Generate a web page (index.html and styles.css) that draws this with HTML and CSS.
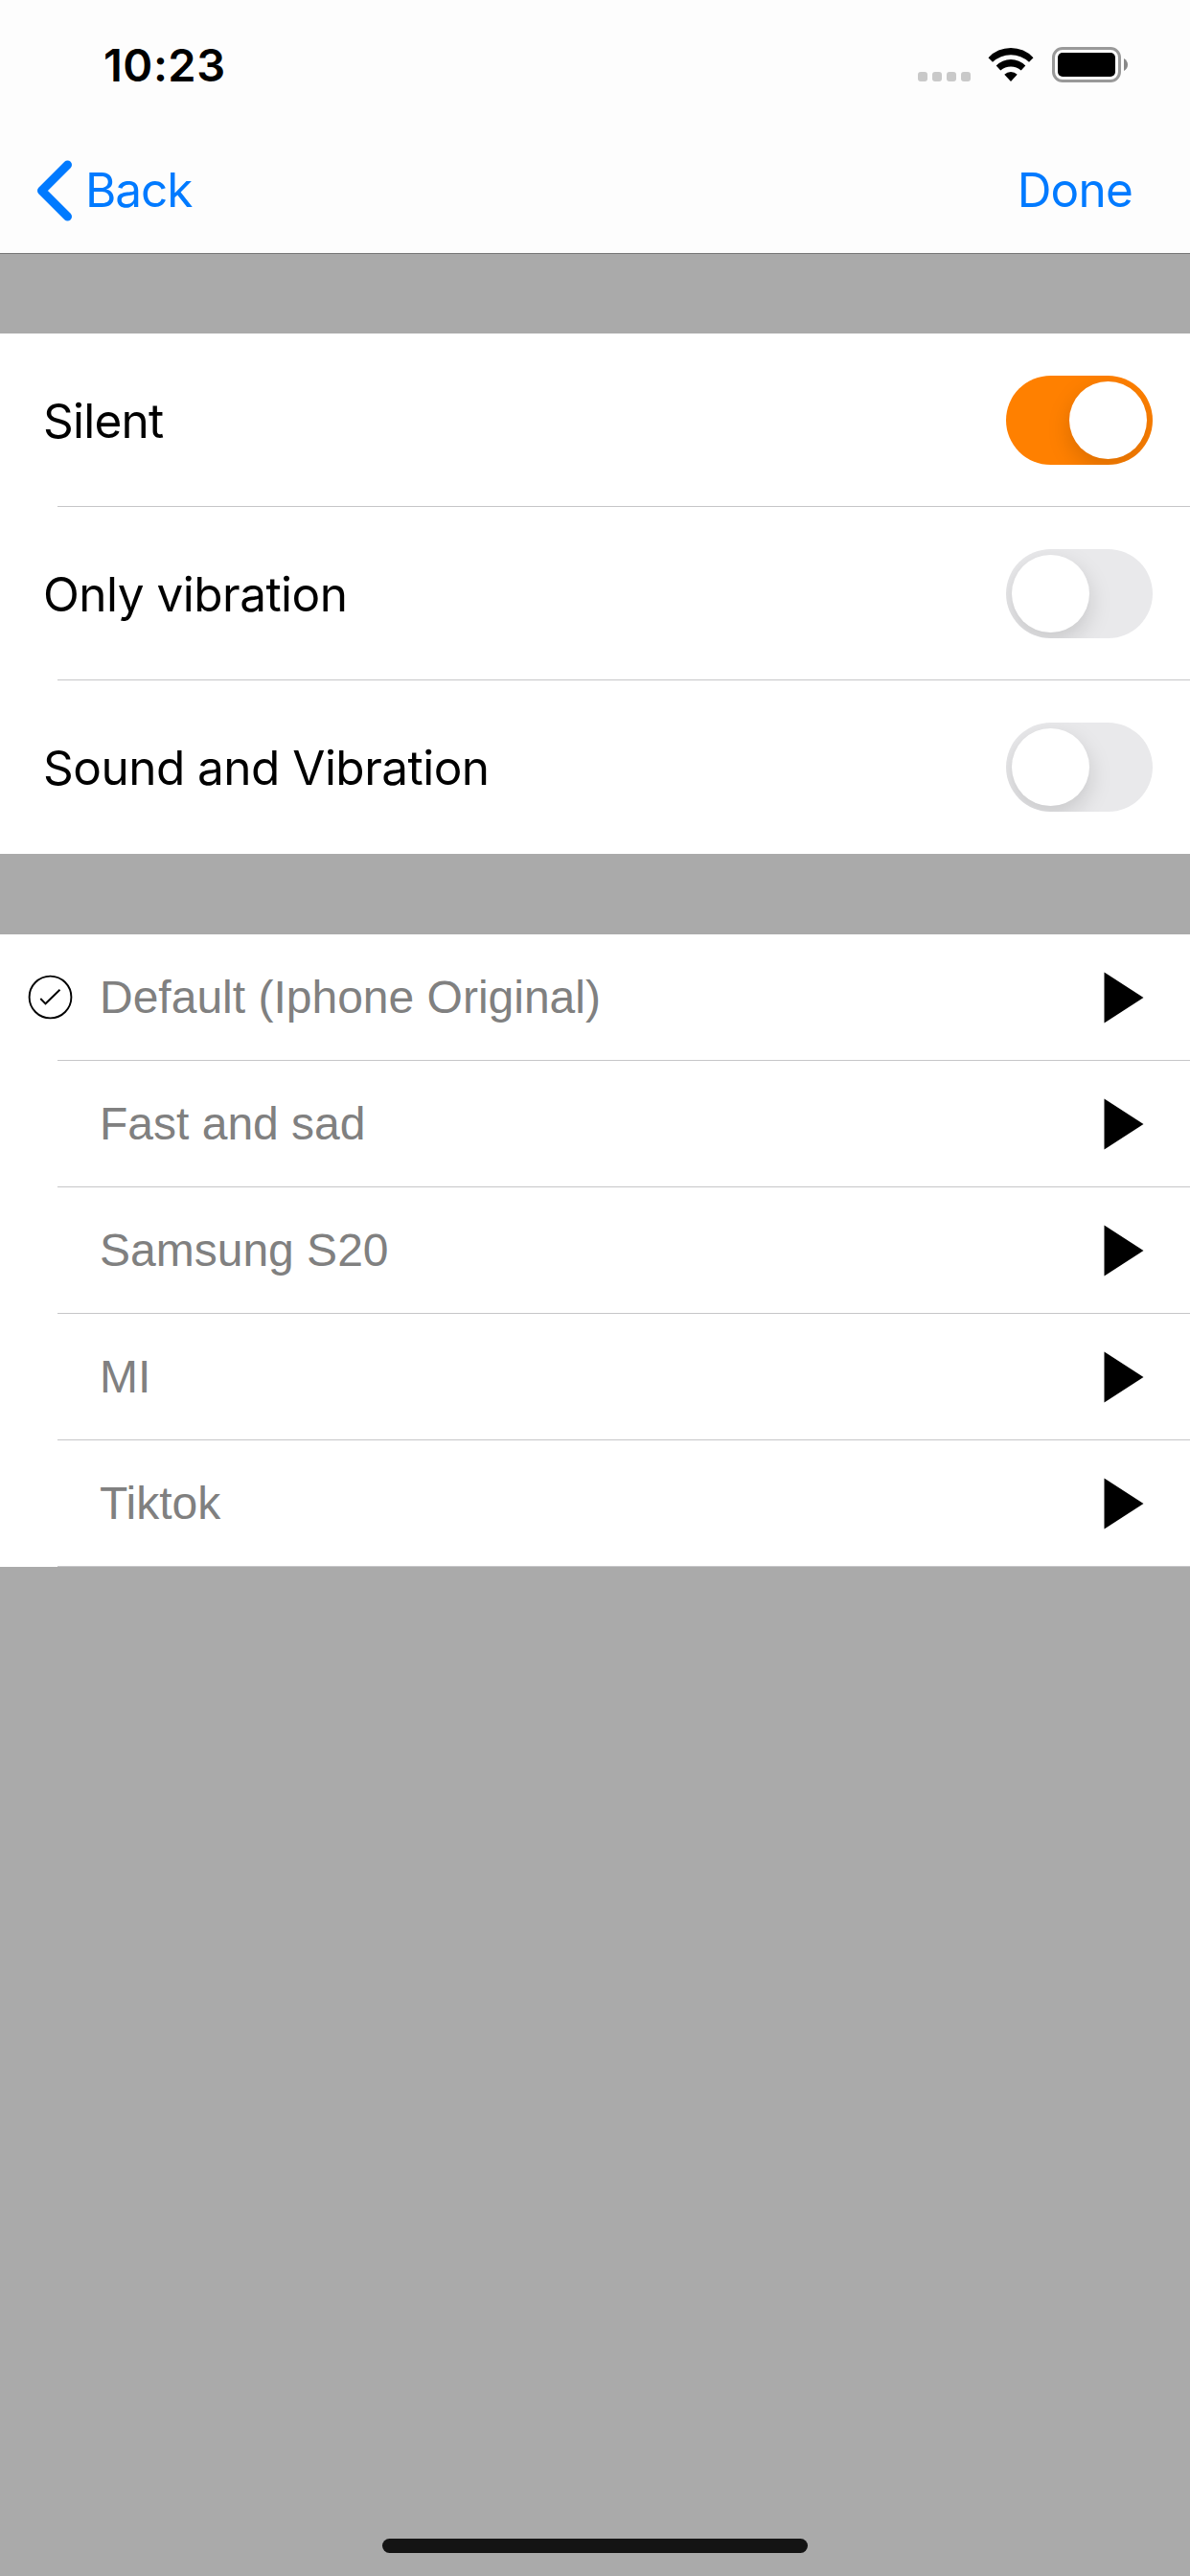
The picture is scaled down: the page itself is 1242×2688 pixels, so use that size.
FILE: index.html
```html
<!DOCTYPE html>
<html lang="en">
<head>
<meta charset="utf-8">
<title>Notification sound</title>
<link rel="stylesheet" href="styles.css">
</head>
<body>
<div class="screen">
  <header class="header">
    <div class="status">
      <span class="time">10:23</span>
      <div class="indicators">
        <div class="signal"><i></i><i></i><i></i><i></i></div>
        <svg class="wifi" width="48" height="37" viewBox="0 0 48 37">
          <path d="M.5 11.2A32 32 0 0 1 47.5 11.2L43 15.7A27.8 27.8 0 0 0 5 15.7Z"/>
          <path d="M8.7 19.6A21.3 21.3 0 0 1 39.3 19.6L34.7 24.6A16 16 0 0 0 13.3 24.6Z"/>
          <path d="M17.3 28.7A9.5 9.5 0 0 1 30.7 28.7L24 36Z"/>
        </svg>
        <svg class="battery" width="80" height="37" viewBox="0 0 80 37">
          <rect x="1.5" y="1.5" width="69" height="34" rx="9.5" fill="none" stroke="#999" stroke-width="3"/>
          <rect x="6" y="6" width="60" height="25" rx="5"/>
          <path d="M75 12Q79 14.5 79 18.5T75 25Z" fill="#888"/>
        </svg>
      </div>
    </div>
    <nav class="nav">
      <a class="back">
        <svg width="38" height="64" viewBox="0 0 38 64"><path d="M32.5 5L5.5 32L32.5 59" fill="none" stroke="#007aff" stroke-width="9" stroke-linecap="round" stroke-linejoin="round"/></svg>
        <span>Back</span>
      </a>
      <a class="done">Done</a>
    </nav>
  </header>

  <section class="group">
    <div class="row option"><span class="label silent">Silent</span><span class="toggle on"><i></i></span></div>
    <div class="row option"><span class="label">Only vibration</span><span class="toggle"><i></i></span></div>
    <div class="row option"><span class="label">Sound and Vibration</span><span class="toggle"><i></i></span></div>
  </section>

  <section class="group">
    <div class="row sound">
      <svg class="check" width="47" height="47" viewBox="0 0 47 47" fill="none" stroke="#000"><circle cx="23.5" cy="23.5" r="21.9" stroke-width="1.9"/><path d="M13.3 25L18.5 30.3L33.5 15.8" stroke-width="1.9"/></svg>
      <span class="name">Default (Iphone Original)</span>
      <svg class="play" width="42" height="54" viewBox="0 0 42 54"><path d="M.5 .5L41.5 27L.5 53.5Z"/></svg>
    </div>
    <div class="row sound"><span class="name">Fast and sad</span><svg class="play" width="42" height="54" viewBox="0 0 42 54"><path d="M.5 .5L41.5 27L.5 53.5Z"/></svg></div>
    <div class="row sound"><span class="name">Samsung S20</span><svg class="play" width="42" height="54" viewBox="0 0 42 54"><path d="M.5 .5L41.5 27L.5 53.5Z"/></svg></div>
    <div class="row sound"><span class="name">MI</span><svg class="play" width="42" height="54" viewBox="0 0 42 54"><path d="M.5 .5L41.5 27L.5 53.5Z"/></svg></div>
    <div class="row sound"><span class="name">Tiktok</span><svg class="play" width="42" height="54" viewBox="0 0 42 54"><path d="M.5 .5L41.5 27L.5 53.5Z"/></svg></div>
  </section>

  <div class="home"></div>
</div>
</body>
</html>
```
FILE: styles.css
```css
* { box-sizing: border-box; }
body { margin: 0; }
svg { display: block; flex: none; }

.screen {
  width: 1242px;
  height: 2688px;
  display: flex;
  flex-direction: column;
  background: #aaa;
  font-family: Inter, "Liberation Sans", sans-serif;
  color: #000;
  overflow: hidden;
}

/* Status and navigation bars */
.header {
  height: 265px;
  background: #fdfdfd;
  border-bottom: 1px solid #777;
}
.status {
  height: 132px;
  padding: 0 64px 0 108px;
  display: flex;
  justify-content: space-between;
  align-items: center;
  padding-top: 3px;
}
.time { font-size: 47px; font-weight: 600; letter-spacing: .5px; }
.indicators { display: flex; align-items: center; }
.signal { display: flex; gap: 5px; margin: 25px 18px 0 0; }
.signal i { width: 10px; height: 10px; border-radius: 3px; background: #c9c9c9; }
.wifi { margin-right: 19px; }
.nav {
  height: 132px;
  padding: 0 60px 0 38px;
  display: flex;
  justify-content: space-between;
  align-items: center;
  font-size: 49.5px;
  color: #007aff;
}
.back { display: flex; align-items: center; gap: 13px; letter-spacing: -1.1px; }
.back svg { margin-top: 1px; }
.done { letter-spacing: -.8px; }

/* Lists */
.group { margin-top: 83px; background: #fff; }
.group + .group { margin-top: 84px; }
.row {
  display: flex;
  align-items: center;
  border-bottom: 1px solid transparent;
  background: linear-gradient(#c6c6c8, #c6c6c8) 60px 100% / 100% 1px no-repeat border-box;
}
.option {
  height: 181px;
  padding: 0 39px 0 45px;
  justify-content: space-between;
}
.option:last-child { background: none; }
.label { font-size: 49.5px; letter-spacing: -.52px; padding-top: 2px; }
.silent { letter-spacing: -.75px; }

.toggle {
  width: 153px;
  height: 93px;
  padding: 6px;
  display: flex;
  border-radius: 47px;
  background: #e9e9eb;
  overflow: hidden;
}
.toggle i {
  width: 81px;
  height: 81px;
  border-radius: 50%;
  background: #fff;
  box-shadow: 0 9px 24px rgba(0, 0, 0, .15);
}
.toggle.on { background: #ff8000; justify-content: flex-end; }

.sound { height: 132px; padding: 0 48px 0 29px; }
.check { margin-right: -47px; }
.name {
  flex: 1;
  padding-left: 75px;
  font-family: "Liberation Sans", sans-serif;
  font-size: 48px;
  color: #808080;
}

.home {
  width: 444px;
  height: 15px;
  margin: auto auto 24px;
  border-radius: 8px;
  background: #141414;
}
```
